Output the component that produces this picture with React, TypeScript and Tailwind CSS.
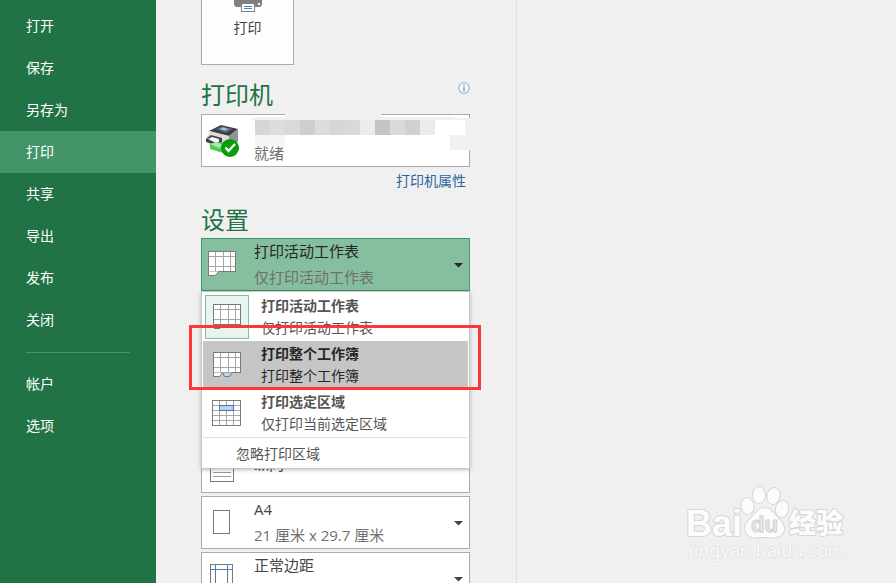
import type { ReactNode } from "react";
import clsx from "clsx";

const FONT = "font-['Open_Sans','Noto_Sans_CJK_SC',sans-serif]";

const navItems = ["打开", "保存", "另存为", "打印", "共享", "导出", "发布", "关闭"];
const accountItems = ["帐户", "选项"];

const mosaic = [
  "#d6d6d6", "#dddddd", "#d9d9d9", "#cecece", "#dcdcdc", "#d6d6d6",
  "#d9d9d9", "#ececec", "#c4c4c4", "#dadada", "#d0d0d0", "#ebebeb",
];

const NavItem = ({ label, active = false }: { label: string; active?: boolean }) => (
  <li>
    <button
      type="button"
      className={clsx(
        "block h-[42px] w-full pl-[26px] text-left text-sm text-white",
        active && "bg-[#439467]"
      )}
    >
      {label}
    </button>
  </li>
);

const SheetIcon = ({ tab = "none" }: { tab?: "none" | "gray" | "white" | "blue" }) => (
  <svg width="28" height="26" viewBox="0 0 28 26" shapeRendering="crispEdges" aria-hidden="true">
    <rect x="0.5" y="0.5" width="27" height="20" fill="#fff" stroke="#7a7a7a" />
    <path d="M1 5.5H27M1 15.5H27M7.5 1V20M15.5 1V20M22.5 1V20" stroke="#a6a6a6" fill="none" />
    {tab === "white" && (
      <g shapeRendering="auto">
        <path d="M0.5 20.5V24.5H6.5Q8 24.5 9 22.5L10.5 20.5" fill="#fff" stroke="#7a7a7a" />
        <path d="M1 20.5H10" stroke="#c9c9c9" />
      </g>
    )}
    {tab === "gray" && <path d="M1 21H9L7 25H1Z" fill="#777" shapeRendering="auto" />}
    {tab === "blue" && (
      <g shapeRendering="auto">
        <path d="M9.5 20.5L11.5 24.5H16.5L19.5 20.5" fill="#bcd3ec" stroke="#7a7a7a" />
        <path d="M0.5 20.5V24.5H6.5L9.5 20.5" fill="#fff" stroke="#7a7a7a" />
      </g>
    )}
  </svg>
);

const SelectionIcon = () => (
  <svg width="30" height="26" viewBox="0 0 30 26" shapeRendering="crispEdges" aria-hidden="true">
    <rect x="0.5" y="0.5" width="28" height="25" fill="#fff" stroke="#7a7a7a" />
    <path d="M1 5.5H28M1 10.5H28M1 15.5H28M1 20.5H28M7.5 1V25M14.5 1V25M21.5 1V25" stroke="#a6a6a6" />
    <rect x="7.5" y="5.5" width="14" height="5" fill="#bcd3ec" stroke="#3f78b5" />
  </svg>
);

const PortraitIcon = () => (
  <svg width="24" height="32" viewBox="0 0 24 32" shapeRendering="crispEdges" aria-hidden="true">
    <rect x="0.5" y="0.5" width="23" height="31" fill="#fff" stroke="#7a7a7a" />
    <path d="M3 6.5H21M3 10.5H21M3 14.5H21M3 18.5H21M3 22.5H21M3 26.5H21" stroke="#9b9b9b" />
  </svg>
);

const PaperIcon = () => (
  <svg width="18" height="24" viewBox="0 0 18 24" shapeRendering="crispEdges" aria-hidden="true">
    <rect x="0.5" y="0.5" width="16" height="23" fill="#fff" stroke="#7a7a7a" />
  </svg>
);

const MarginsIcon = () => (
  <svg width="24" height="28" viewBox="0 0 24 28" shapeRendering="crispEdges" aria-hidden="true">
    <rect x="0.5" y="0.5" width="22" height="27" fill="#fff" stroke="#7a7a7a" />
    <path d="M1 5.5H22M1 22.5H22M5.5 1V27M17.5 1V27" stroke="#4a7ab5" />
  </svg>
);

const PrintIcon = () => (
  <svg width="28" height="12" viewBox="0 0 28 12" aria-hidden="true">
    <path d="M0 0H28V5L26 7H2L0 5Z" fill="#808080" />
    <rect x="24" y="3" width="2" height="2" fill="#fff" />
    <rect x="7.5" y="3.5" width="13" height="8" fill="#fff" stroke="#808080" />
    <path d="M10 6.5H18M10 8.5H18" stroke="#3f86c0" />
  </svg>
);

const PrinterIcon = () => (
  <svg width="36" height="34" viewBox="0 0 36 34" aria-hidden="true">
    <path d="M2 13L6 7L32 10V20L22 28L5 23Z" fill="#d4d4d4" />
    <path d="M4 7L16 1L33 5L24 12Z" fill="#3d4145" />
    <path d="M11 5L17 2.500L27 5L21 8.500Z" fill="#64727d" />
    <path d="M15 5L18 3.500L23 5L20 6.500Z" fill="#9cc9f0" />
    <path d="M4 7L24 12V17L4 11Z" fill="#dcdcdc" />
    <path d="M24 12L33 5V18L24 23Z" fill="#929292" />
    <path d="M1 15L6 11L17 14V20L13 22L1 18Z" fill="#424548" />
    <path d="M3 15L7 13L14 15V18L11 19Z" fill="#f7f7f7" />
    <path d="M5 20L17 18L22 24L18 29L5 25Z" fill="#52c95b" />
    <path d="M5 20L11 18L19 21L14 24Z" fill="#a3eda8" />
    <circle cx="25" cy="24" r="9" fill="#079d0b" />
    <path d="M20.500 23.500L23.500 27L30 20" fill="none" stroke="#fff" strokeWidth="2.200" />
  </svg>
);

const InfoIcon = () => (
  <svg width="12" height="12" viewBox="0 0 12 12" aria-hidden="true">
    <circle cx="6" cy="6" r="5.300" fill="#f7fafe" stroke="#a3bce0" strokeWidth="1.300" />
    <path d="M6 2.500V4M6 5V9.500" stroke="#7da0d4" strokeWidth="1.600" />
  </svg>
);

const Redaction = () => (
  <svg
    className="pointer-events-none absolute top-0 left-[47px]"
    width="228"
    height="38"
    viewBox="0 0 228 38"
    shapeRendering="crispEdges"
    aria-hidden="true"
  >
    <rect x="37" y="0" width="96" height="3" fill="#f0f0f0" />
    <path d="M2 5L10 3H205V4H226V6H2Z" fill="#f0f0f0" />
    <rect x="217" y="4" width="9" height="32" fill="#f0f0f0" />
    <rect x="202" y="21" width="20" height="15" fill="#f0f0f0" />
    <rect x="7" y="21" width="30" height="11" fill="#f5f5f5" />
    {mosaic.map((fill, i) => (
      <rect key={i} x={7 + i * 15} y="6" width="15" height="15" fill={fill} />
    ))}
    <rect x="187" y="6" width="30" height="15" fill="#fff" />
  </svg>
);

type SettingProps = {
  icon: ReactNode;
  title: string;
  detail?: string;
  selected?: boolean;
  single?: boolean;
};

const Setting = ({ icon, title, detail, selected = false, single = false }: SettingProps) => (
  <button
    type="button"
    className={clsx(
      "flex h-[53px] w-full items-center border text-left text-[15px]",
      selected ? "border-[#439467] bg-[#86bf9f]" : "border-[#ababab] bg-white"
    )}
  >
    <span className="flex w-10 shrink-0 justify-center pb-[2px]">{icon}</span>
    <span
      className={clsx(
        "ml-3 flex h-full grow flex-col gap-[6px] leading-5",
        single ? "justify-center pb-[6px]" : "pt-[2px]"
      )}
    >
      <span className={selected ? "text-[#262626]" : "text-[#444]"}>{title}</span>
      {detail && <span className="text-[#6f6f6f]">{detail}</span>}
    </span>
    <svg className="mt-[2px] mr-[6px]" width="9" height="5" viewBox="0 0 9 5" aria-hidden="true">
      <path d="M0 0H9L4.500 4.500Z" fill={selected ? "#262626" : "#444"} />
    </svg>
  </button>
);

type OptionProps = {
  icon: ReactNode;
  title: string;
  detail: string;
  state?: "checked" | "hover";
};

const Option = ({ icon, title, detail, state }: OptionProps) => (
  <button
    type="button"
    role="menuitem"
    className={clsx(
      "flex h-12 w-full items-center pl-[2px] text-left text-sm",
      state === "hover" ? "bg-[#c5c5c5] text-[#262626]" : "text-[#555]"
    )}
  >
    <span
      className={clsx(
        "flex size-11 shrink-0 items-center justify-center border",
        state === "checked" ? "border-[#86bf9f] bg-[#e9f4ee]" : "border-transparent"
      )}
    >
      {icon}
    </span>
    <span className="ml-3 flex flex-col gap-[2px] leading-5">
      <strong className="font-bold">{title}</strong>
      <span>{detail}</span>
    </span>
  </button>
);

const PrintWhatMenu = () => (
  <div
    role="menu"
    className="absolute inset-x-0 top-full z-10 border border-[#c6c6c6] bg-white p-px shadow-[0_1px_4px_rgba(0,0,0,0.25)]"
  >
    <Option icon={<SheetIcon tab="gray" />} title="打印活动工作表" detail="仅打印活动工作表" state="checked" />
    <Option icon={<SheetIcon tab="blue" />} title="打印整个工作簿" detail="打印整个工作簿" state="hover" />
    <Option icon={<SelectionIcon />} title="打印选定区域" detail="仅打印当前选定区域" />
    <button
      type="button"
      role="menuitem"
      className="block h-[30px] w-full border-t border-[#e1e1e1] pt-[3px] pl-[33px] text-left text-sm text-[#555]"
    >
      忽略打印区域
    </button>
    <div className="pointer-events-none absolute top-[33px] -right-3 -left-[13px] h-[65px] border-3 border-[#fb3838]" />
  </div>
);

const Watermark = () => (
  <svg
    className="absolute right-[44px] bottom-[18px]"
    width="168"
    height="82"
    viewBox="0 0 168 82"
    role="img"
    aria-label="Baidu 经验"
  >
    <g fill="#fcfcfc" stroke="#d6d6d6" strokeWidth="2" paintOrder="stroke" strokeLinejoin="round">
      <text x="2" y="53" fontSize="36" fontWeight="700" fontFamily="Liberation Sans, sans-serif">
        Bai
      </text>
      <ellipse cx="63.500" cy="23" rx="6" ry="8" transform="rotate(-6 63.500 23)" />
      <ellipse cx="75" cy="12" rx="6" ry="8" />
      <ellipse cx="89.500" cy="13" rx="6" ry="8" transform="rotate(12 89.500 13)" />
      <ellipse cx="98" cy="26" rx="6" ry="8" transform="rotate(12 98 26)" />
      <path d="M80 25C87 25 90 31 95 36C100 41 102 47 98 51C94 56 86 54 80 54C73 54 68 56 64 52C58 46 62 40 67 35C72 30 75 25 80 25Z" />
      <text x="105" y="50" fontSize="27" fontWeight="900" fontFamily="Noto Sans CJK SC, sans-serif">
        经验
      </text>
      <text x="5" y="74" fontSize="18" strokeWidth="1" fontFamily="Noto Sans, sans-serif">
        jingyan.baidu.com
      </text>
    </g>
    <text
      x="67"
      y="49"
      fontSize="22"
      fontWeight="700"
      fontFamily="Liberation Sans, sans-serif"
      fill="#e9e9e9"
      stroke="#cfcfcf"
    >
      du
    </text>
  </svg>
);

const App = () => {
  return (
    <div className={`relative flex h-screen overflow-hidden bg-[#f0f0f0] ${FONT}`}>
      <nav className="w-[156px] shrink-0 bg-[#217346] pt-[5px]">
        <ul>
          {navItems.map((label) => (
            <NavItem key={label} label={label} active={label === "打印"} />
          ))}
        </ul>
        <hr className="mx-[26px] mt-[11px] mb-[10px] border-[#439467]" />
        <ul>
          {accountItems.map((label) => (
            <NavItem key={label} label={label} />
          ))}
        </ul>
      </nav>

      <main className="w-[361px] shrink-0 border-r border-[#dedede] pr-[46px] pl-[45px]">
        <button
          type="button"
          className="flex h-[65px] w-[93px] flex-col items-center border border-t-0 border-[#ababab] bg-[#fdfdfd] text-sm text-[#444]"
        >
          <PrintIcon />
          <span className="mt-[6px]">打印</span>
        </button>

        <section>
          <div className="mt-[14px] flex h-[35px] items-start justify-between">
            <h2 className="text-2xl text-[#217346]">打印机</h2>
            <span className="mt-[3px]">
              <InfoIcon />
            </span>
          </div>
          <div className="relative">
            <button
              type="button"
              className="flex h-[53px] w-full items-center border border-[#ababab] bg-white pl-[3px] text-left text-[15px] text-[#6f6f6f]"
            >
              <PrinterIcon />
              <span className="ml-[13px] self-end pb-[3px] leading-5">就绪</span>
            </button>
            <Redaction />
          </div>
          <div className="mt-1 mr-1 text-right text-sm">
            <a href="#properties" className="text-[#2b669d]">
              打印机属性
            </a>
          </div>
        </section>

        <section>
          <h2 className="mt-[13px] h-[34px] text-2xl text-[#217346]">设置</h2>
          <div className="relative">
            <Setting
              icon={<SheetIcon tab="white" />}
              title="打印活动工作表"
              detail="仅打印活动工作表"
              selected
            />
            <PrintWhatMenu />
          </div>
          <div className="mt-[149px] flex flex-col gap-[3px]">
            <Setting icon={<PortraitIcon />} title="纵向" single />
            <Setting icon={<PaperIcon />} title="A4" detail="21 厘米 x 29.7 厘米" />
            <Setting icon={<MarginsIcon />} title="正常边距" />
          </div>
        </section>
      </main>

      <Watermark />
    </div>
  );
};

export default App;
